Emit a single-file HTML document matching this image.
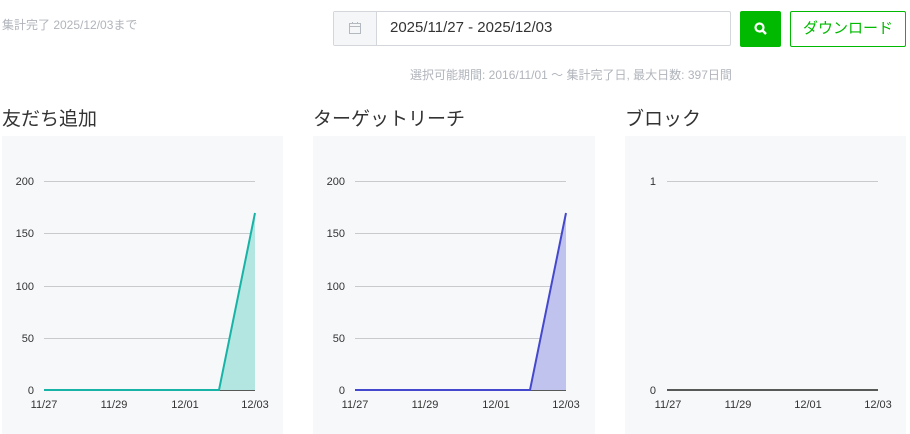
<!DOCTYPE html>
<html><head><meta charset="utf-8"><style>
body{margin:0;width:910px;height:434px;background:#fff;font-family:"Liberation Sans","Noto Sans CJK JP",sans-serif;position:relative;overflow:hidden}
.a{position:absolute}
</style></head><body>
<div class="a" style="left:2px;top:16px;font-size:12px;color:#b0b4bb">集計完了 2025/12/03まで</div>
<div class="a" style="left:333px;top:11px;width:398px;height:35px;border:1px solid #d3d6db;border-radius:2px;box-sizing:border-box;"></div>
<div class="a" style="left:334px;top:12px;width:42px;height:33px;background:#f5f6f8;border-right:1px solid #d3d6db"></div>
<svg class="a" style="left:347px;top:20px" width="16" height="16" viewBox="0 0 16 16"><rect x="2.5" y="3.5" width="11" height="10" fill="none" stroke="#b4b8bf" stroke-width="1"/><line x1="2.5" y1="6.5" x2="13.5" y2="6.5" stroke="#b4b8bf"/><line x1="5.5" y1="2" x2="5.5" y2="4" stroke="#b4b8bf"/><line x1="10.5" y1="2" x2="10.5" y2="4" stroke="#b4b8bf"/></svg>
<div class="a" style="left:390px;top:19px;font-size:15px;color:#333">2025/11/27 - 2025/12/03</div>
<div class="a" style="left:740px;top:11px;width:41px;height:36px;background:#00b900;border-radius:2px"></div>
<svg class="a" style="left:753px;top:21px" width="16" height="16" viewBox="0 0 16 16"><circle cx="6.5" cy="6.5" r="4" fill="none" stroke="#fff" stroke-width="2.2"/><line x1="9.5" y1="9.5" x2="13" y2="13" stroke="#fff" stroke-width="2.5"/></svg>
<div class="a" style="left:790px;top:11px;width:116px;height:36px;border:1px solid #00b900;border-radius:2px;box-sizing:border-box;color:#00b900;font-size:15px;text-align:center;line-height:34px">ダウンロード</div>
<div class="a" style="left:410px;top:66px;font-size:12px;color:#b0b4bb">選択可能期間: 2016/11/01 〜 集計完了日, 最大日数: 397日間</div>
<div class="a" style="left:2px;top:104px;font-size:19px;color:#333">友だち追加</div>
<div class="a" style="left:313px;top:104px;font-size:19px;color:#333">ターゲットリーチ</div>
<div class="a" style="left:625px;top:104px;font-size:19px;color:#333">ブロック</div>
<svg class="a" style="left:0;top:0" width="910" height="434" font-family="Liberation Sans, sans-serif" font-size="11" fill="#333">
<rect x="2" y="136" width="281" height="298" fill="#f7f8fa"/>
<rect x="313" y="136" width="282" height="298" fill="#f7f8fa"/>
<rect x="625" y="136" width="281" height="298" fill="#f7f8fa"/>
<g stroke="#c8cacd" stroke-width="1">
<line x1="44" y1="181.5" x2="255" y2="181.5"/><line x1="44" y1="233.5" x2="255" y2="233.5"/><line x1="44" y1="286.5" x2="255" y2="286.5"/><line x1="44" y1="338.5" x2="255" y2="338.5"/>
<line x1="355" y1="181.5" x2="566" y2="181.5"/><line x1="355" y1="233.5" x2="566" y2="233.5"/><line x1="355" y1="286.5" x2="566" y2="286.5"/><line x1="355" y1="338.5" x2="566" y2="338.5"/>
<line x1="667" y1="181.5" x2="878" y2="181.5"/>
</g>
<g stroke="#222" stroke-width="1.5"><line x1="44" y1="390" x2="255" y2="390"/><line x1="355" y1="390" x2="566" y2="390"/><line x1="667" y1="390" x2="878" y2="390"/></g>
<polygon points="219,390 255,213 255,390" fill="#b3e5e1"/>
<polyline points="44,390 219,390 255,213" fill="none" stroke="#17b3a6" stroke-width="2"/>
<polygon points="530,390 566,213 566,390" fill="#c1c3ef"/>
<polyline points="355,390 530,390 566,213" fill="none" stroke="#4448cc" stroke-width="2"/>
<g text-anchor="end">
<text x="34" y="185">200</text><text x="34" y="237">150</text><text x="34" y="290">100</text><text x="34" y="342">50</text><text x="34" y="394">0</text>
<text x="345" y="185">200</text><text x="345" y="237">150</text><text x="345" y="290">100</text><text x="345" y="342">50</text><text x="345" y="394">0</text>
<text x="656" y="185">1</text><text x="656" y="394">0</text>
</g>
<g text-anchor="middle">
<text x="44" y="408">11/27</text><text x="114" y="408">11/29</text><text x="185" y="408">12/01</text><text x="255" y="408">12/03</text>
<text x="355" y="408">11/27</text><text x="425" y="408">11/29</text><text x="496" y="408">12/01</text><text x="566" y="408">12/03</text>
<text x="668" y="408">11/27</text><text x="738" y="408">11/29</text><text x="808" y="408">12/01</text><text x="878" y="408">12/03</text>
</g>
</svg>
</body></html>
